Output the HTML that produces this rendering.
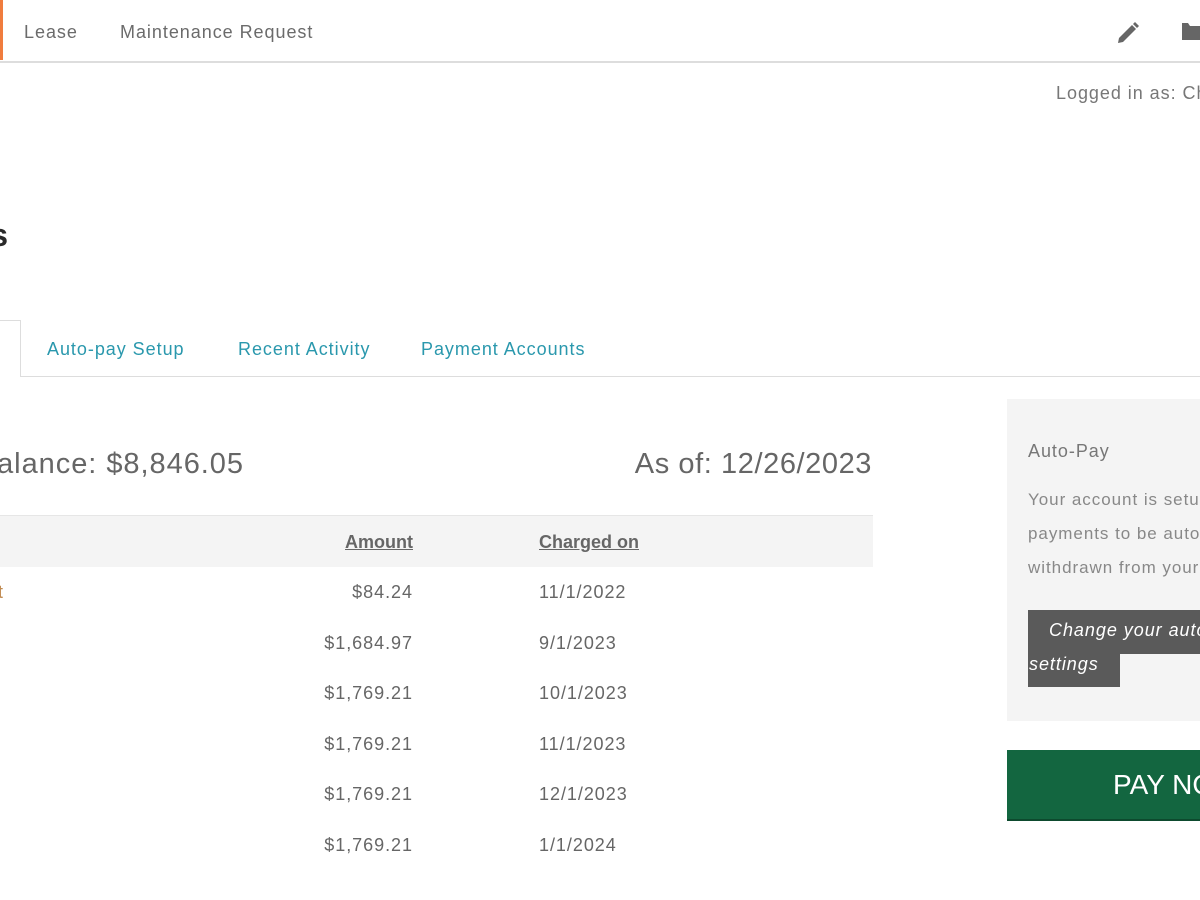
<!DOCTYPE html>
<html><head><meta charset="utf-8"><style>
*{margin:0;padding:0;box-sizing:border-box}
html,body{width:1200px;height:900px;overflow:hidden}
body{position:relative;background:#fff;font-family:"Liberation Sans",sans-serif;color:#666;letter-spacing:0.06em}
.a{position:absolute;white-space:nowrap;line-height:1}
.r{text-align:right}
.clip{position:absolute;left:0;top:0;width:1200px;height:900px;overflow:hidden}
</style></head><body><div class="clip">
<div class="a" style="left:0;top:0;width:3px;height:60px;background:#f07c3e"></div>
<div class="a" style="left:0;top:61px;width:1200px;height:2px;background:#ddd"></div>
<div class="a" style="left:24px;top:23px;font-size:18px;color:#6b6b6b">Lease</div>
<div class="a" style="left:120px;top:23px;font-size:18px;color:#6b6b6b">Maintenance Request</div>
<svg class="a" style="left:1115px;top:20px" width="26" height="24" viewBox="0 0 26 24"><path d="M4 18 L17 5 L21 9 L8 22 L3 23 Z" fill="#666"/><path d="M18 4 L20 2 L24 6 L22 8 Z" fill="#666"/></svg>
<svg class="a" style="left:1180px;top:20px" width="20" height="22" viewBox="0 0 20 22"><path d="M2 3 H8 L10 6 H20 V20 H2 Z" fill="#666"/></svg>
<div class="a" style="left:1056px;top:84px;font-size:18px;color:#777">Logged in as: Ch</div>
<div class="a r" style="left:-300px;top:219px;width:308px;font-size:32px;font-weight:bold;color:#2a2a2a;letter-spacing:0">Payments</div>
<div class="a" style="left:-2px;top:320px;width:23px;height:57px;border:1px solid #ddd;border-bottom:none;background:#fff"></div>
<div class="a" style="left:21px;top:376px;width:1179px;height:1px;background:#ddd"></div>
<div class="a" style="left:47px;top:340px;font-size:18px;color:#2a98ad">Auto-pay Setup</div>
<div class="a" style="left:238px;top:340px;font-size:18px;color:#2a98ad">Recent Activity</div>
<div class="a" style="left:421px;top:340px;font-size:18px;color:#2a98ad">Payment Accounts</div>
<div class="a r" style="left:-200px;top:450px;width:444px;font-size:29px;color:#666">Balance: $8,846.05</div>
<div class="a r" style="left:500px;top:450px;width:372px;font-size:29px;color:#666;letter-spacing:0.02em">As of: 12/26/2023</div>
<div class="a" style="left:0;top:515px;width:873px;height:52px;background:#f4f4f4;border-top:1px solid #e6e6e6"></div>
<div class="a r" style="left:200px;top:533px;width:213px;font-size:18px;color:#666;text-decoration:underline;font-weight:bold;letter-spacing:0">Amount</div>
<div class="a" style="left:539px;top:533px;font-size:18px;color:#666;text-decoration:underline;font-weight:bold;letter-spacing:0">Charged on</div>
<div class="a r" style="left:-100px;top:583px;width:104px;font-size:18px;color:#c08a50">Rent</div>
<div class="a r" style="left:200px;top:583px;width:213px;font-size:18px">$84.24</div><div class="a" style="left:539px;top:583px;font-size:18px">11/1/2022</div>
<div class="a r" style="left:200px;top:634px;width:213px;font-size:18px">$1,684.97</div><div class="a" style="left:539px;top:634px;font-size:18px">9/1/2023</div>
<div class="a r" style="left:200px;top:684px;width:213px;font-size:18px">$1,769.21</div><div class="a" style="left:539px;top:684px;font-size:18px">10/1/2023</div>
<div class="a r" style="left:200px;top:735px;width:213px;font-size:18px">$1,769.21</div><div class="a" style="left:539px;top:735px;font-size:18px">11/1/2023</div>
<div class="a r" style="left:200px;top:785px;width:213px;font-size:18px">$1,769.21</div><div class="a" style="left:539px;top:785px;font-size:18px">12/1/2023</div>
<div class="a r" style="left:200px;top:836px;width:213px;font-size:18px">$1,769.21</div><div class="a" style="left:539px;top:836px;font-size:18px">1/1/2024</div>
<div class="a" style="left:1007px;top:399px;width:193px;height:322px;background:#f4f4f4"></div>
<div class="a" style="left:1028px;top:442px;font-size:18px;color:#777">Auto-Pay</div>
<div class="a" style="left:1028px;top:491px;font-size:17px;color:#888">Your account is setup for</div>
<div class="a" style="left:1028px;top:525px;font-size:17px;color:#888">payments to be automatically</div>
<div class="a" style="left:1028px;top:559px;font-size:17px;color:#888">withdrawn from your account</div>
<div class="a" style="left:1028px;top:610px;width:172px;height:44px;background:#5a5a5a"></div>
<div class="a" style="left:1028px;top:653px;width:92px;height:34px;background:#5a5a5a"></div>
<div class="a" style="left:1049px;top:621px;font-size:18px;font-style:italic;color:#fff">Change your auto-pay</div>
<div class="a" style="left:1029px;top:655px;font-size:18px;font-style:italic;color:#fff">settings</div>
<div class="a" style="left:1007px;top:750px;width:193px;height:71px;background:#136640;border-bottom:2px solid #0d4a2e"></div>
<div class="a" style="left:1113px;top:771px;font-size:28px;color:#fff;letter-spacing:0">PAY NOW</div>
</div></body></html>
